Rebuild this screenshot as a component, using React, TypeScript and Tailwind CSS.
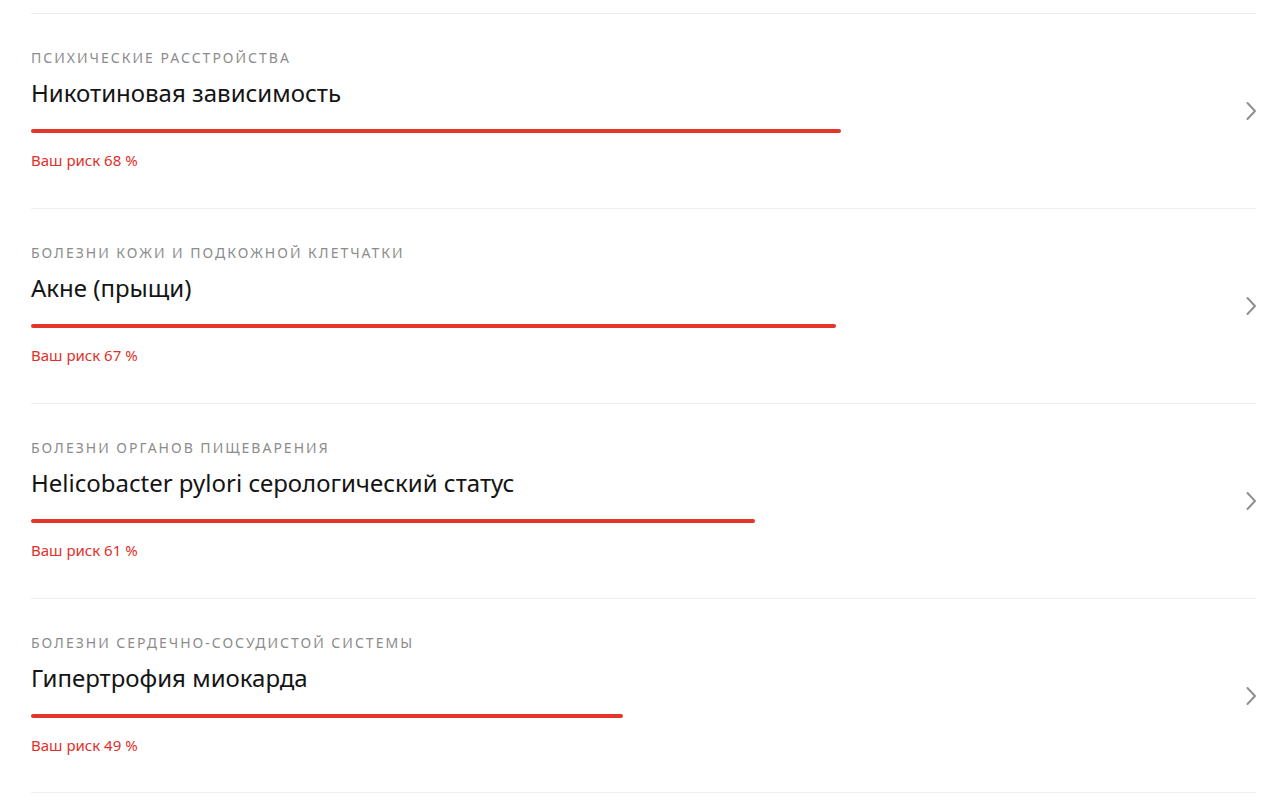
import React from "react";

type Risk = {
  category: string;
  title: string;
  percent: number;
  barWidth: number;
};

const risks: Risk[] = [
  { category: "Психические расстройства", title: "Никотиновая зависимость", percent: 68, barWidth: 810 },
  { category: "Болезни кожи и подкожной клетчатки", title: "Акне (прыщи)", percent: 67, barWidth: 805 },
  { category: "Болезни органов пищеварения", title: "Helicobacter pylori серологический статус", percent: 61, barWidth: 724 },
  { category: "Болезни сердечно-сосудистой системы", title: "Гипертрофия миокарда", percent: 49, barWidth: 592 },
];

function Chevron() {
  return (
    <svg width="12" height="20" viewBox="0 0 12 20" fill="none" className="shrink-0">
      <path d="M2.5 2 L10 10 L2.5 18" stroke="#8f8f8f" strokeWidth="2" strokeLinecap="round" strokeLinejoin="round" />
    </svg>
  );
}

function RiskRow({ item, last }: { item: Risk; last: boolean }) {
  return (
    <div
      className={
        "flex h-[195px] items-center border-t border-[#ededed] " + (last ? "border-b" : "")
      }
    >
      <div className="flex h-full flex-1 flex-col pt-[36px]">
        <div className="text-[14px] leading-[16px] uppercase tracking-[2px] text-[#8c8c8c]">
          {item.category}
        </div>
        <div className="mt-[11px] text-[24px] leading-[32px] text-[#141414]">{item.title}</div>
        <div
          className="mt-[20px] h-[4px] rounded-full bg-[#e5352b]"
          style={{ width: item.barWidth }}
        />
        <div className="mt-[17px] text-[15px] leading-[20px] text-[#e0302a]">
          Ваш риск {item.percent} %
        </div>
      </div>
      <div className="-mr-[1px]">
        <Chevron />
      </div>
    </div>
  );
}

export default function App() {
  return (
    <div
      className="min-h-[801px] w-[1280px] bg-white pt-[13px]"
      style={{ fontFamily: '"Noto Sans", "Open Sans", sans-serif' }}
    >
      <div className="ml-[31px] w-[1225px]">
        {risks.map((r, i) => (
          <RiskRow key={r.title} item={r} last={i === risks.length - 1} />
        ))}
      </div>
    </div>
  );
}
